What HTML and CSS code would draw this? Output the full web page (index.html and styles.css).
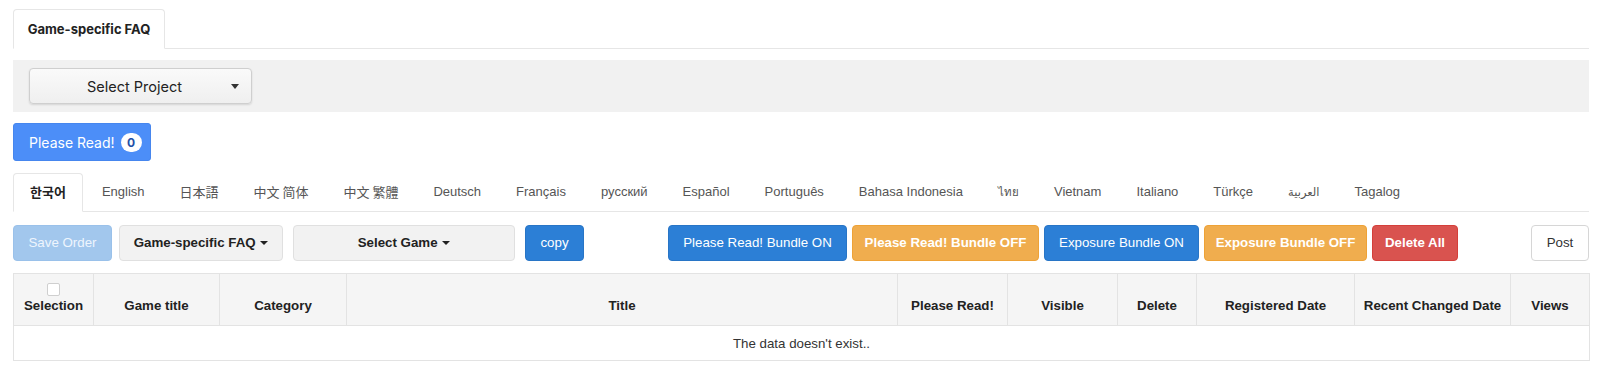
FILE: index.html
```html
<!DOCTYPE html>
<html lang="en">
<head>
<meta charset="utf-8">
<title>Game-specific FAQ</title>
<link rel="stylesheet" href="styles.css">
</head>
<body>
<ul class="page-tabs">
  <li class="page-tab active">Game-specific FAQ</li>
</ul>

<div class="project-panel">
  <button class="project-select"><span class="project-label">Select Project</span><span class="caret-lg"></span></button>
</div>

<button class="notice-btn">Please Read! <span class="notice-badge">0</span></button>

<ul class="lang-tabs">
  <li class="lang active"><span class="ko">한국어</span></li>
  <li class="lang">English</li>
  <li class="lang"><span class="ja">日本語</span></li>
  <li class="lang"><span class="sc">中文 简体</span></li>
  <li class="lang"><span class="tc">中文 繁體</span></li>
  <li class="lang">Deutsch</li>
  <li class="lang">Français</li>
  <li class="lang">русский</li>
  <li class="lang">Español</li>
  <li class="lang">Português</li>
  <li class="lang">Bahasa Indonesia</li>
  <li class="lang"><span class="th">ไทย</span></li>
  <li class="lang">Vietnam</li>
  <li class="lang">Italiano</li>
  <li class="lang">Türkçe</li>
  <li class="lang"><span class="ar">العربية</span></li>
  <li class="lang">Tagalog</li>
</ul>

<div class="toolbar">
  <button class="btn btn-disabled w-save">Save Order</button>
  <button class="btn btn-default btn-bold w-faq">Game-specific FAQ <span class="caret"></span></button>
  <button class="btn btn-default btn-bold w-game">Select Game <span class="caret"></span></button>
  <button class="btn btn-primary w-copy">copy</button>
  <div class="bulk-group">
    <button class="btn btn-primary w-pr-on">Please Read! Bundle ON</button>
    <button class="btn btn-warning btn-bold w-pr-off">Please Read! Bundle OFF</button>
    <button class="btn btn-primary w-ex-on">Exposure Bundle ON</button>
    <button class="btn btn-warning btn-bold w-ex-off">Exposure Bundle OFF</button>
    <button class="btn btn-danger btn-bold w-del">Delete All</button>
  </div>
  <button class="btn btn-white w-post">Post</button>
</div>

<table class="faq-table">
  <colgroup>
    <col class="c-sel"><col class="c-game"><col class="c-cat"><col class="c-title">
    <col class="c-read"><col class="c-vis"><col class="c-del"><col class="c-reg">
    <col class="c-chg"><col class="c-views">
  </colgroup>
  <thead>
    <tr>
      <th><span class="checkbox"></span>Selection</th>
      <th>Game title</th>
      <th>Category</th>
      <th>Title</th>
      <th>Please Read!</th>
      <th>Visible</th>
      <th>Delete</th>
      <th>Registered Date</th>
      <th>Recent Changed Date</th>
      <th>Views</th>
    </tr>
  </thead>
  <tbody>
    <tr><td colspan="10" class="empty">The data doesn't exist..</td></tr>
  </tbody>
</table>
</body>
</html>
```

FILE: styles.css
```css
* { box-sizing: border-box; }

body {
  margin: 0;
  padding: 9px 11px 0 13px;
  background: #fff;
  font-family: "Liberation Sans", Arial, sans-serif;
  font-size: 13.3px;
  color: #333;
}

ul { list-style: none; margin: 0; padding: 0; }
button { font: inherit; cursor: pointer; }

/* top tab */
.page-tabs {
  display: flex;
  border-bottom: 1px solid #e6e6e6;
}
.page-tab {
  font-family: Inter, "Liberation Sans", sans-serif;
  font-weight: 700;
  font-size: 13px;
  line-height: 18px;
  color: #222;
  padding: 10px 0;
  width: 152px;
  text-align: center;
  white-space: nowrap;
  border: 1px solid #e6e6e6;
  border-bottom-color: transparent;
  border-radius: 4px 4px 0 0;
  background: #fff;
  margin-bottom: -1px;
}

/* project panel */
.project-panel {
  margin-top: 11px;
  height: 52px;
  background: #f1f1f1;
  padding: 8px 16px;
}
.project-select {
  display: flex;
  align-items: center;
  width: 223px;
  height: 36px;
  padding: 0 12px 0 14px;
  border: 1px solid #cfcfcf;
  border-radius: 4px;
  background: linear-gradient(#fafafa, #efefef);
  box-shadow: 0 1px 2px rgba(0,0,0,0.12);
  font-family: Inter, "Liberation Sans", sans-serif;
  font-size: 14.5px;
  color: #222;
}
.project-label { flex: 1; text-align: center; }
.caret-lg {
  flex: none;
  width: 0; height: 0;
  border-left: 4px solid transparent;
  border-right: 4px solid transparent;
  border-top: 5px solid #333;
  margin-left: 6px;
}

/* please read button */
.notice-btn {
  display: flex;
  align-items: center;
  margin-top: 11px;
  height: 38px;
  width: 138px;
  padding: 0 0 0 15px;
  border: 1px solid #4686ee;
  border-radius: 3px;
  background: #4c8ef8;
  color: #fff;
  font-family: Inter, "Liberation Sans", sans-serif;
  font-size: 14px;
  gap: 6px;
  white-space: nowrap;
}
.notice-badge {
  flex: none;
  display: inline-flex;
  align-items: center;
  justify-content: center;
  width: 21px;
  height: 19px;
  border-radius: 10px;
  background: #fff;
  color: #1f4fa8;
  font-weight: 700;
  font-size: 12px;
}

/* language tabs */
.lang-tabs {
  display: flex;
  margin-top: 12px;
  border-bottom: 1px solid #e6e6e6;
}
.lang {
  padding: 9px 15px;
  line-height: 18px;
  margin-right: 3px;
  margin-bottom: -1px;
  font-size: 13px;
  color: #555;
  border: 1px solid transparent;
  border-radius: 4px 4px 0 0;
  white-space: nowrap;
}
.lang.active {
  color: #222;
  font-weight: 700;
  background: #fff;
  border-color: #e6e6e6;
  border-bottom-color: transparent;
  padding: 9px 16px;
}
.ko { font-family: "Noto Sans CJK KR", sans-serif; }
.ja { font-family: "Noto Sans CJK JP", sans-serif; }
.sc { font-family: "Noto Sans CJK SC", sans-serif; }
.tc { font-family: "Noto Sans CJK TC", sans-serif; }
.th, .ar { font-family: "DejaVu Sans", sans-serif; font-size: 11.5px; }

/* toolbar */
.toolbar {
  display: flex;
  align-items: center;
  margin-top: 13px;
}
.btn {
  height: 36px;
  padding: 0 6px;
  border: 1px solid transparent;
  border-radius: 4px;
  font-size: 13.3px;
  line-height: 20px;
  white-space: nowrap;
  text-align: center;
}
.btn-bold { font-weight: 700; }
.btn-disabled { background: #a2c7ed; border-color: #9ac1ea; color: #eef5fd; cursor: default; }
.btn-default { background: #f2f2f2; border-color: #e0e0e0; color: #222; }
.btn-primary { background: #2c7fd6; border-color: #2875c6; color: #fff; }
.btn-warning { background: #f0ad4e; border-color: #eea236; color: #fff; }
.btn-danger { background: #d9534f; border-color: #d43f3a; color: #fff; }
.btn-white { background: #fff; border-color: #d6d6d6; color: #333; }

.caret {
  display: inline-block;
  width: 0; height: 0;
  vertical-align: middle;
  border-left: 4px solid transparent;
  border-right: 4px solid transparent;
  border-top: 4px solid #222;
  margin-left: 1px;
}

.w-save { width: 99px; }
.w-faq { width: 164px; margin-left: 7px; }
.w-game { width: 222px; margin-left: 10px; }
.w-copy { width: 59px; margin-left: 10px; }

.bulk-group {
  display: flex;
  gap: 5px;
  margin-left: 84px;
}
.w-pr-on { width: 179px; }
.w-pr-off { width: 187px; }
.w-ex-on { width: 155px; }
.w-ex-off { width: 163px; }
.w-del { width: 86px; }
.w-post { width: 58px; margin-left: auto; }

/* table */
.faq-table {
  margin-top: 12px;
  width: 1576px;
  border-collapse: collapse;
  table-layout: fixed;
}
.faq-table th, .faq-table td {
  border: 1px solid #e3e3e3;
}
.faq-table th {
  background: #f5f5f5;
  font-weight: 700;
  text-align: center;
  vertical-align: bottom;
  height: 52px;
  padding: 0 4px 9px;
  line-height: 20px;
  color: #222;
  white-space: nowrap;
}
.checkbox {
  display: block;
  width: 13px;
  height: 13px;
  margin: 0 auto;
  background: #fff;
  border: 1px solid #cfcfcf;
  border-radius: 2px;
}
.c-sel { width: 80px; }
.c-game { width: 126px; }
.c-cat { width: 127px; }
.c-title { width: 551px; }
.c-read { width: 110px; }
.c-vis { width: 110px; }
.c-del { width: 79px; }
.c-reg { width: 158px; }
.c-chg { width: 156px; }
.c-views { width: 79px; }

.faq-table td.empty {
  height: 35px;
  text-align: center;
  vertical-align: middle;
  color: #333;
}
```
